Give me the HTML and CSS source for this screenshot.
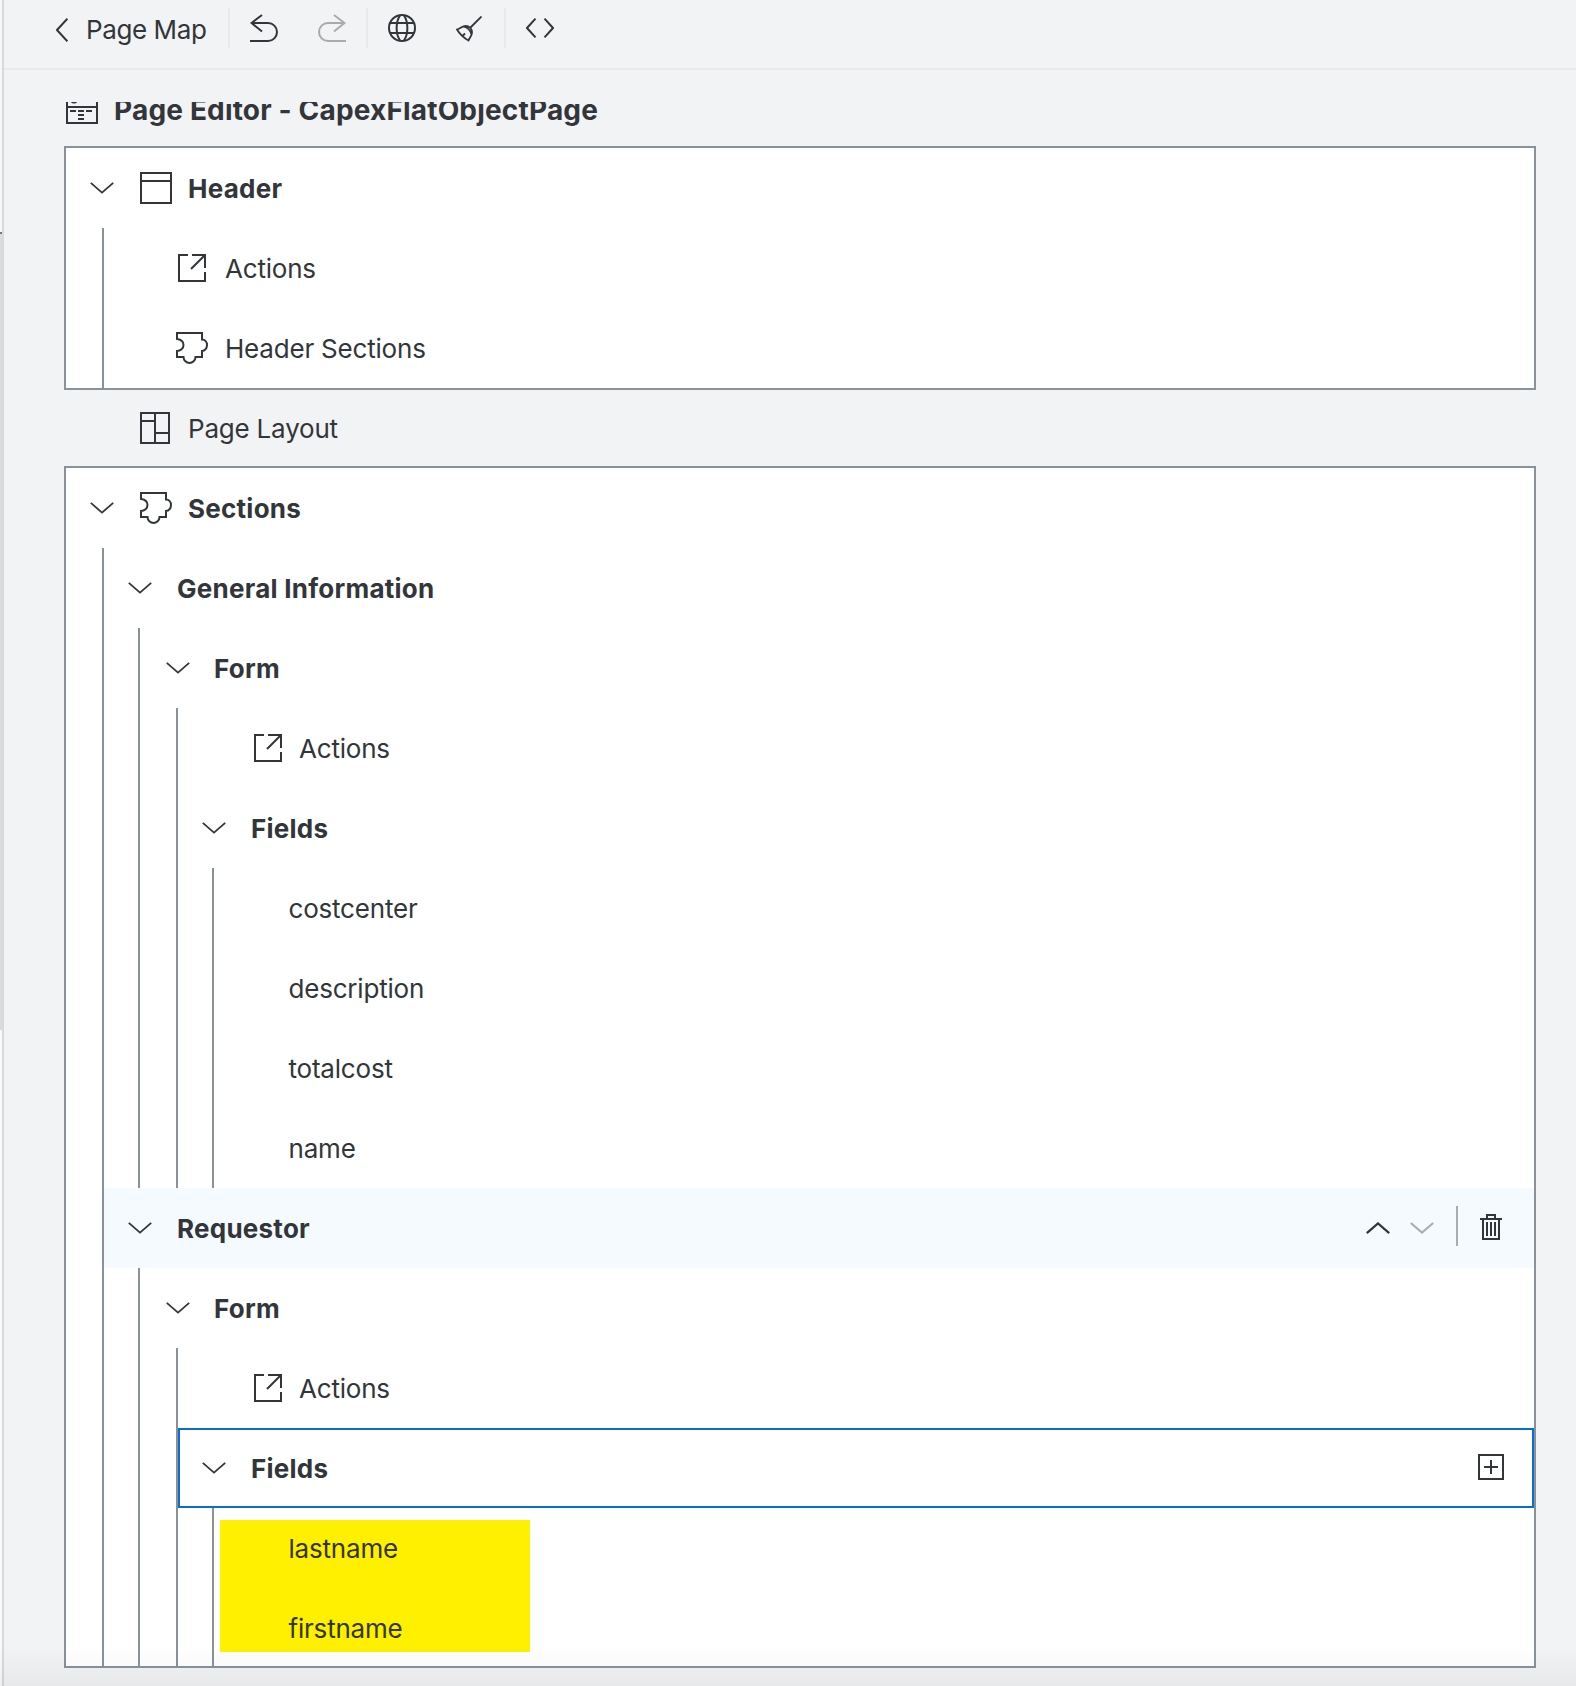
FILE: index.html
```html
<!DOCTYPE html>
<html lang="en">
<head>
<meta charset="utf-8">
<title>Page Editor</title>
<link rel="stylesheet" href="styles.css">
</head>
<body>
<svg class="defs" aria-hidden="true">
  <symbol id="down" viewBox="0 0 24 12"><path d="M.8 .9 12 10.6 23.2 .9"/></symbol>
  <symbol id="action" viewBox="0 0 32 32"><path d="M12 3H3v26h26V20M16 3h13v13M28.500 3.500 15 17"/></symbol>
  <symbol id="puzzle" viewBox="0 0 32 32"><path d="M1 1h25v6.500c3 0 5 2.500 5 5.500s-2 6-5 6V25h-6.500c0 3.500-3 6-6 6s-6-2.500-6-6H1v-6c3.500 0 6.500-2.500 6.500-6S4.500 7.500 1 7Z"/></symbol>
</svg>
<div class="app">
  <div class="splitter"><i class="gap"></i><i class="mark"></i><i class="thumb"></i></div>
  <main class="editor">
    <header class="toolbar">
      <svg class="back" viewBox="0 0 12 24"><path d="M11.400 .7 1 12l10.400 11.300"/></svg>
      <span class="back-label">Page Map</span>
      <i class="sep sep-a"></i>
      <svg class="undo" viewBox="0 0 28 28"><path d="M12 1 1.500 9 12 17.500M1.500 9H18a9 9 0 0 1 0 18H0"/></svg>
      <svg class="redo" viewBox="0 0 28 28"><path d="M16 1 26.500 9 16 17.500M26.500 9H10a9 9 0 0 0 0 18H28"/></svg>
      <i class="sep sep-b"></i>
      <svg class="globe" viewBox="0 0 28 28"><circle cx="14" cy="14" r="13"/><path d="M2 9h24M2 19h24M12 1.500C7.500 8 7.500 20 12 26.500M16 1.500C20.500 8 20.500 20 16 26.500"/></svg>
      <svg class="broom" viewBox="0 0 26 26"><path d="M25.500 .5 14.500 11.500M1 13.500C5 12.500 6 10 9.500 10c4 0 6.500 3 6.500 6.500 0 3-2 4.500-3.500 8C8 22 4 18.500 1 13.500ZM7.500 10.500C11.500 11.500 14.500 14.500 15.500 18.500M7 19.500l2-2"/></svg>
      <i class="sep sep-c"></i>
      <svg class="code" viewBox="0 0 28 20"><path d="M9.500 .7 1 10l8.500 9.300M18.500 .7 27 10l-8.500 9.300"/></svg>
    </header>
    <div class="scroll">
      <div class="title">
        <svg viewBox="0 0 32 32"><path d="M1 1h30v30H1ZM1 15h30M4 19h6M12 19h6M20 19h6M12 23h6M12 27h6"/><circle cx="8" cy="8" r="2.500"/></svg>
        <h1>Page Editor - CapexFlatObjectPage</h1>
      </div>
      <section class="box">
        <div class="row"><svg class="chev"><use href="#down"/></svg><svg class="icon head" viewBox="0 0 32 32"><path d="M1 1h30v30H1ZM1 9h30"/></svg><b>Header</b></div>
        <div class="kids odd">
          <div class="row sub"><svg class="icon"><use href="#action"/></svg><span>Actions</span></div>
          <div class="row sub"><svg class="icon"><use href="#puzzle"/></svg><span>Header Sections</span></div>
        </div>
      </section>
      <div class="row layout"><svg class="icon" viewBox="0 0 32 32"><path d="M1 1h28v30H1ZM15 1v30M1 9h14M15 21h14"/></svg><span>Page Layout</span></div>
      <section class="box">
        <div class="row"><svg class="chev"><use href="#down"/></svg><svg class="icon head"><use href="#puzzle"/></svg><b>Sections</b></div>
        <div class="kids odd">
          <div class="row"><svg class="chev"><use href="#down"/></svg><b>General Information</b></div>
          <div class="kids">
            <div class="row form"><svg class="chev"><use href="#down"/></svg><b>Form</b></div>
            <div class="kids odd">
              <div class="row sub deep"><svg class="icon"><use href="#action"/></svg><span>Actions</span></div>
              <div class="row"><svg class="chev"><use href="#down"/></svg><b>Fields</b></div>
              <div class="kids">
                <div class="row leaf"><span>costcenter</span></div>
                <div class="row leaf"><span>description</span></div>
                <div class="row leaf"><span>totalcost</span></div>
                <div class="row leaf"><span>name</span></div>
              </div>
            </div>
          </div>
          <div class="row hover"><svg class="chev"><use href="#down"/></svg><b>Requestor</b>
            <div class="tools">
              <svg class="chev up"><use href="#down"/></svg><svg class="chev off"><use href="#down"/></svg><i class="bar"></i>
              <svg class="trash" viewBox="0 0 22 26"><path d="M0 5h22M7 5V1h8v4M3 5v20h16V5M7 8v14M11 8v14M15 8v14"/></svg>
            </div>
          </div>
          <div class="kids">
            <div class="row form"><svg class="chev"><use href="#down"/></svg><b>Form</b></div>
            <div class="kids odd">
              <div class="row sub deep"><svg class="icon"><use href="#action"/></svg><span>Actions</span></div>
              <div class="row selected"><svg class="chev"><use href="#down"/></svg><b>Fields</b>
                <svg class="plus" viewBox="0 0 26 26"><path d="M1 1h24v24H1ZM6 13h14M13 6v14"/></svg>
              </div>
              <div class="kids marked">
                <div class="row leaf"><span>lastname</span></div>
                <div class="row leaf last"><span>firstname</span></div>
              </div>
            </div>
          </div>
        </div>
      </section>
    </div>
  </main>
  <div class="fade"></div>
</div>
</body>
</html>
```
FILE: styles.css
```css
* { box-sizing: border-box; }
body { margin: 0; background: #f2f3f5; color: #32363a; font: 26px/30px Inter, "Liberation Sans", sans-serif; letter-spacing: -.2px; }
svg { display: block; flex: none; fill: none; stroke: #32363a; stroke-width: 2; }
.defs { position: absolute; width: 0; height: 0; }
.app { position: relative; display: flex; height: 1686px; overflow: hidden; }
.splitter { display: flex; flex-direction: column; width: 4px; border-right: 2px solid #d8d9db; background: #fafafa; }
.gap { height: 232px; background: #f6f7f8; }
.mark { height: 2px; background: #77797b; }
.thumb { height: 796px; background: #dadbdc; }
.editor { flex: 1; min-width: 0; }
.toolbar { display: flex; align-items: flex-start; height: 70px; padding-left: 52px; border-bottom: 2px solid #e8e9eb; }
.back { width: 12px; height: 24px; margin-top: 18px; }
.back-label { width: 141px; margin: 15px 0 0 18px; white-space: nowrap; letter-spacing: -.4px; }
.sep { width: 2px; height: 40px; margin-top: 8px; background: #e8e9eb; }
.sep-a { margin-left: 1px; }
.undo { width: 28px; height: 28px; margin: 14px 0 0 20px; }
.redo { width: 28px; height: 28px; margin: 14px 0 0 40px; stroke: #a8aaac; }
.sep-b { margin-left: 20px; }
.globe { width: 28px; height: 28px; margin: 14px 0 0 20px; }
.broom { width: 26px; height: 26px; margin: 16px 0 0 40px; stroke-width: 1.8; }
.sep-c { margin-left: 22px; }
.code { width: 28px; height: 20px; margin: 18px 0 0 20px; }
.scroll { height: 1584px; margin: 32px 40px 0 60px; overflow: hidden; }
.title { display: flex; align-items: center; gap: 16px; height: 54px; margin-top: -10px; padding: 0 0 22px 2px; }
.title svg { width: 32px; height: 32px; }
h1 { margin: 4px 0 0; font-size: 28px; line-height: 30px; font-weight: 700; letter-spacing: .17px; white-space: nowrap; }
.box { border: 2px solid #89919a; background: #fff; }
.row { display: flex; align-items: center; height: 80px; padding-left: 24px; white-space: nowrap; }
.row b, .row span { position: relative; top: 1px; }
.row b { letter-spacing: .25px; }
.chev { width: 24px; height: 12px; margin-right: 25px; stroke-width: 1.8; }
.icon { width: 32px; height: 32px; margin-right: 16px; }
.head { margin-left: 1px; }
.kids { margin-left: 34px; border-left: 2px solid #89919a; }
.odd { margin-left: 36px; }
.last { height: 78px; border-top: 2px solid transparent; }
.sub { padding-left: 72px; }
.sub .icon { margin-right: 17px; }
.deep { padding-left: 74px; }
.deep .icon { margin-right: 15px; }
.leaf { padding-left: 74.500px; }
.form { padding-left: 26px; }
.form .chev { margin-right: 24px; }
.layout { height: 76px; padding-left: 76px; }
.hover { background: #f5faff; }
.tools { display: flex; align-items: center; margin-left: auto; padding-right: 32px; }
.tools .chev { margin-right: 20px; }
.tools .up { transform: scaleY(-1); stroke-width: 2.2; }
.tools .off { margin-right: 22px; stroke: #a8adb2; stroke-width: 2; }
.bar { width: 2px; height: 40px; margin: 0 22px 4px 0; background: #a9acb0; }
.trash { width: 22px; height: 26px; margin-bottom: 2px; }
.selected { padding-left: 22px; border: 2px solid #0a6ed1; }
.plus { width: 26px; height: 26px; margin: 0 28px 2px auto; }
.marked { background: linear-gradient(#fff000, #fff000) 6px 12px / 310px 132px no-repeat; }
.marked span { color: #32360a; }
.fade { position: absolute; left: 0; right: 0; bottom: 0; height: 40px; background: linear-gradient(transparent, rgba(0,0,0,.045)); pointer-events: none; }
```
